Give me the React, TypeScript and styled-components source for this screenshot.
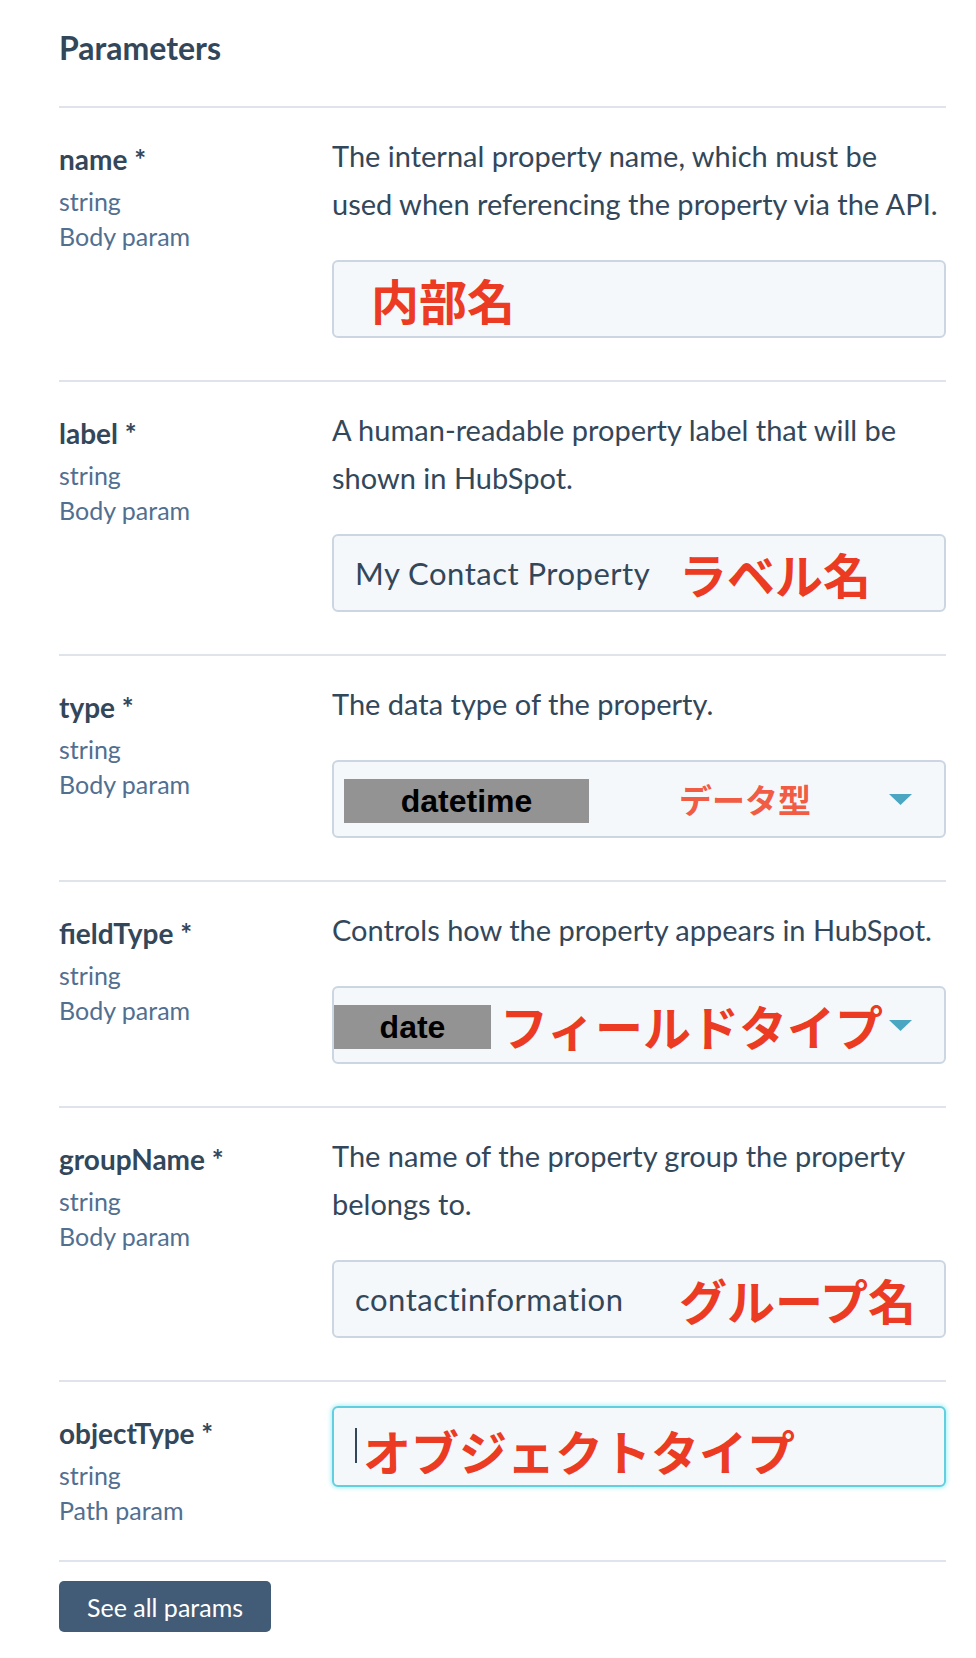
import React from 'react'
import styled, { createGlobalStyle } from 'styled-components'

const GlobalStyle = createGlobalStyle`
  html, body {
    margin: 0;
    padding: 0;
    background: #ffffff;
  }
  body {
    font-family: Lato, "Noto Sans", sans-serif;
    color: #33475b;
  }
`

type Param = {
  name: string
  type: string
  location: string
  description?: string
}

const Page = styled.div`
  width: 976px;
  box-sizing: border-box;
  padding: 28px 30px 24px 59px;
`

const Title = styled.h2`
  margin: 0 0 38px;
  font-size: 32px;
  line-height: 40px;
  font-weight: 700;
  color: #33475b;
`

const List = styled.div`
  border-top: 2px solid #dfe3eb;
`

const Row = styled.div`
  display: grid;
  grid-template-columns: 273px 1fr;
  padding: 24px 0 34px;
  border-bottom: 2px solid #dfe3eb;
`

const Meta = styled.div`
  display: flex;
  flex-direction: column;
  padding-top: 4px;
`

const Name = styled.div`
  font-size: 28px;
  line-height: 46px;
  font-weight: 700;
  color: #33475b;
`

const Type = styled.div`
  font-size: 25px;
  line-height: 38px;
  color: #516f90;
`

const Location = styled(Type)`
  line-height: 32px;
`

const Body = styled.div`
  display: flex;
  flex-direction: column;
`

const Description = styled.p`
  margin: 0 0 32px;
  padding-right: 8px;
  font-size: 29px;
  line-height: 48px;
  color: #33475b;
`

const Field = styled.div<{ $focused?: boolean; $pad?: number }>`
  display: flex;
  align-items: center;
  height: ${(p) => (p.$focused ? 81 : 78)}px;
  box-sizing: border-box;
  margin-bottom: 8px;
  padding-left: ${(p) => p.$pad ?? 21}px;
  padding-top: ${(p) => (p.$focused ? 6 : 0)}px;
  background: #f5f8fa;
  border: 2px solid ${(p) => (p.$focused ? '#62cfe1' : '#cbd6e2')};
  border-radius: 6px;
  box-shadow: ${(p) => (p.$focused ? '0 0 4px 1px rgba(0, 208, 228, 0.35)' : 'none')};
  overflow: hidden;
`

const Value = styled.div<{ $w?: number }>`
  display: flex;
  align-items: center;
  width: ${(p) => (p.$w ? `${p.$w}px` : 'auto')};
  font-size: 31px;
  letter-spacing: 0.5px;
  color: #33475b;
`

const Chip = styled.span<{ $w: number }>`
  display: flex;
  align-items: center;
  justify-content: center;
  width: ${(p) => p.$w}px;
  height: 44px;
  margin-top: 4px;
  background: #939393;
  color: #000000;
  font-family: "Liberation Sans", Arial, sans-serif;
  font-weight: 700;
  font-size: 32px;
  letter-spacing: 0;
`

const Note = styled.span<{ $size?: number; $soft?: boolean; $gap?: number }>`
  margin-left: ${(p) => p.$gap ?? 0}px;
  font-family: "Noto Sans CJK JP", sans-serif;
  font-weight: 700;
  font-size: ${(p) => p.$size ?? 48}px;
  line-height: 1;
  color: ${(p) => (p.$soft ? '#f15c45' : '#ec3b23')};
  white-space: nowrap;
`

const Caret = styled.span`
  display: block;
  width: 2px;
  height: 35px;
  margin-bottom: 8px;
  background: #33475b;
`

const Arrow = styled.svg`
  margin-left: auto;
  margin-right: 32px;
  flex-shrink: 0;
`

const Button = styled.button`
  margin-top: 19px;
  width: 212px;
  height: 51px;
  border: none;
  border-radius: 5px;
  background: #425b76;
  color: #ffffff;
  font-family: Lato, sans-serif;
  font-size: 25px;
  cursor: pointer;
`

const Triangle = () => (
  <Arrow width="23" height="11" viewBox="0 0 23 11">
    <path d="M0 0 H23 L11.5 11 Z" fill="#4aa6c1" />
  </Arrow>
)

const params: Param[] = [
  {
    name: 'name',
    type: 'string',
    location: 'Body param',
    description: 'The internal property name, which must be used when referencing the property via the API.',
  },
  {
    name: 'label',
    type: 'string',
    location: 'Body param',
    description: 'A human-readable property label that will be shown in HubSpot.',
  },
  {
    name: 'type',
    type: 'string',
    location: 'Body param',
    description: 'The data type of the property.',
  },
  {
    name: 'fieldType',
    type: 'string',
    location: 'Body param',
    description: 'Controls how the property appears in HubSpot.',
  },
  {
    name: 'groupName',
    type: 'string',
    location: 'Body param',
    description: 'The name of the property group the property belongs to.',
  },
  {
    name: 'objectType',
    type: 'string',
    location: 'Path param',
  },
]

const fields: React.ReactNode[] = [
  <Field key="name" $pad={37}>
    <Note>内部名</Note>
  </Field>,
  <Field key="label">
    <Value $w={324}>My Contact Property</Value>
    <Note>ラベル名</Note>
  </Field>,
  <Field key="type" $pad={0}>
    <Value $w={345}>
      <Chip $w={245} style={{ marginLeft: 10 }}>datetime</Chip>
    </Value>
    <Note $size={33} $soft>データ型</Note>
    <Triangle />
  </Field>,
  <Field key="fieldType" $pad={0}>
    <Chip $w={157}>date</Chip>
    <Note $gap={9}>フィールドタイプ</Note>
    <Triangle />
  </Field>,
  <Field key="groupName">
    <Value $w={324}>contactinformation</Value>
    <Note>グループ名</Note>
  </Field>,
  <Field key="objectType" $focused>
    <Caret />
    <Note $gap={6}>オブジェクトタイプ</Note>
  </Field>,
]

export default function App() {
  return (
    <>
      <GlobalStyle />
      <Page>
        <Title>Parameters</Title>
        <List>
          {params.map((p, i) => (
            <Row key={p.name}>
              <Meta>
                <Name>{p.name} *</Name>
                <Type>{p.type}</Type>
                <Location>{p.location}</Location>
              </Meta>
              <Body>
                {p.description && <Description>{p.description}</Description>}
                {fields[i]}
              </Body>
            </Row>
          ))}
        </List>
        <Button>See all params</Button>
      </Page>
    </>
  )
}
